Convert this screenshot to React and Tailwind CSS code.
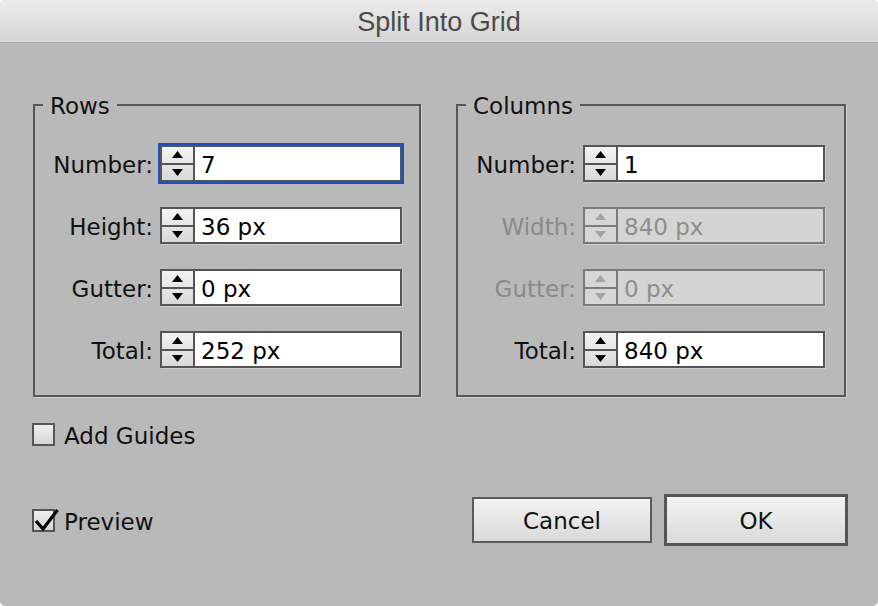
import clsx from 'clsx'

const font = { fontFamily: '"DejaVu Sans", Verdana, sans-serif' }

function Arrow({ up, color }) {
  return (
    <svg width="11" height="7" viewBox="0 0 11 7">
      {up ? <path d="M5.5 0 L11 7 L0 7 Z" fill={color} /> : <path d="M0 0 L11 0 L5.5 7 Z" fill={color} />}
    </svg>
  )
}

function Spin({ value, disabled, focus }) {
  const arrow = disabled ? '#a3a3a3' : '#000'
  return (
    <div
      className={clsx(
        'flex h-[37px] w-[242px] border-2 shadow-[1px_1px_0_rgba(255,255,255,0.3)]',
        disabled ? 'border-[#7b7b7b]' : 'border-[#555]',
        focus && 'ring-2 ring-[#1d4fc2]'
      )}
    >
      <div
        className={clsx(
          'flex w-[33px] flex-col border-r-2',
          disabled ? 'border-[#7b7b7b] bg-[#d6d6d6]' : 'border-[#555] bg-gradient-to-b from-[#f3f3f3] to-[#d9d9d9]'
        )}
      >
        <div className={clsx('flex flex-1 items-center justify-center border-b-2', disabled ? 'border-[#7b7b7b]' : 'border-[#555]')}>
          <Arrow up color={arrow} />
        </div>
        <div className="flex flex-1 items-center justify-center">
          <Arrow color={arrow} />
        </div>
      </div>
      <div
        className={clsx(
          'flex flex-1 items-center pl-[6px] pt-[3px] text-[23px] leading-[26px]',
          disabled ? 'bg-[#d4d4d4] text-[#8e8e8e]' : 'bg-white text-black'
        )}
      >
        {value}
      </div>
    </div>
  )
}

function Group({ title, rows, extraPad }) {
  return (
    <fieldset
      className={clsx(
        'border-2 border-[#575757] pb-[27px] shadow-[1px_1px_0_rgba(255,255,255,0.3)]',
        extraPad ? 'w-[390px] pr-[19px]' : 'w-[388px] pr-[17px]'
      )}
    >
      <legend className="ml-[8px] px-[7px] pt-[3px] text-[23px] leading-[23px] text-[#111]">{title}</legend>
      <div className="grid grid-cols-[118px_242px] items-center gap-x-[7px] gap-y-[25px] pt-[27px]">
        {rows.map((r) => (
          <div key={r.label} className="contents">
            <span className={clsx('pt-[3px] text-right text-[23px] leading-[26px]', r.disabled ? 'text-[#8a8a8a]' : 'text-[#111]')}>
              {r.label}
            </span>
            <Spin value={r.value} disabled={r.disabled} focus={r.focus} />
          </div>
        ))}
      </div>
    </fieldset>
  )
}

function Check({ checked, label }) {
  return (
    <label className="flex h-[24px] items-center gap-[9px] text-[23px] leading-[24px] text-[#111]">
      <span className="relative h-[23px] w-[23px] shrink-0 border-2 border-[#555] bg-gradient-to-b from-[#efefef] to-[#d6d6d6]">
        {checked && (
          <svg className="absolute -left-[2px] -top-[3px]" width="28" height="25" viewBox="0 0 28 25">
            <path d="M4 13 L11 21 L25.5 2" fill="none" stroke="#000" strokeWidth="3.2" />
          </svg>
        )}
      </span>
      <span className="pt-[3px]">{label}</span>
    </label>
  )
}

export default function App() {
  const rows = [
    { label: 'Number:', value: '7', focus: true },
    { label: 'Height:', value: '36 px' },
    { label: 'Gutter:', value: '0 px' },
    { label: 'Total:', value: '252 px' },
  ]
  const cols = [
    { label: 'Number:', value: '1' },
    { label: 'Width:', value: '840 px', disabled: true },
    { label: 'Gutter:', value: '0 px', disabled: true },
    { label: 'Total:', value: '840 px' },
  ]

  return (
    <div className="h-[606px] w-[878px] bg-white">
      <div className="flex h-full w-full flex-col overflow-hidden rounded-t-[6px] rounded-b-[5px] bg-[#b9b9b9]" style={font}>
        <div
          className="flex h-[43px] items-center justify-center border-b border-[#ababab] bg-gradient-to-b from-[#ececec] to-[#d5d5d5] pt-[3px] text-[27px] text-[#4b4b4b]"
          style={{ fontFamily: '"Liberation Sans", Arial, sans-serif' }}
        >
          Split Into Grid
        </div>

        <div className="flex gap-[35px] pl-[33px] pt-[49px]">
          <Group title="Rows" rows={rows} />
          <Group title="Columns" rows={cols} extraPad />
        </div>

        <div className="mt-[25px] pl-[32px]">
          <Check label="Add Guides" />
        </div>

        <div className="mt-[48px] flex items-center justify-between pl-[32px] pr-[30px]">
          <Check checked label="Preview" />
          <div className="flex items-center gap-[12px]">
            <button className="h-[46px] w-[180px] border-2 border-[#5a5a5a] bg-gradient-to-b from-[#f3f3f3] to-[#dadada] pt-[2px] text-[23px] text-[#111]">
              Cancel
            </button>
            <button className="h-[52px] w-[184px] border-[3px] border-[#555] bg-gradient-to-b from-[#f3f3f3] to-[#dadada] pt-[2px] text-[23px] text-[#111]">
              OK
            </button>
          </div>
        </div>
      </div>
    </div>
  )
}
